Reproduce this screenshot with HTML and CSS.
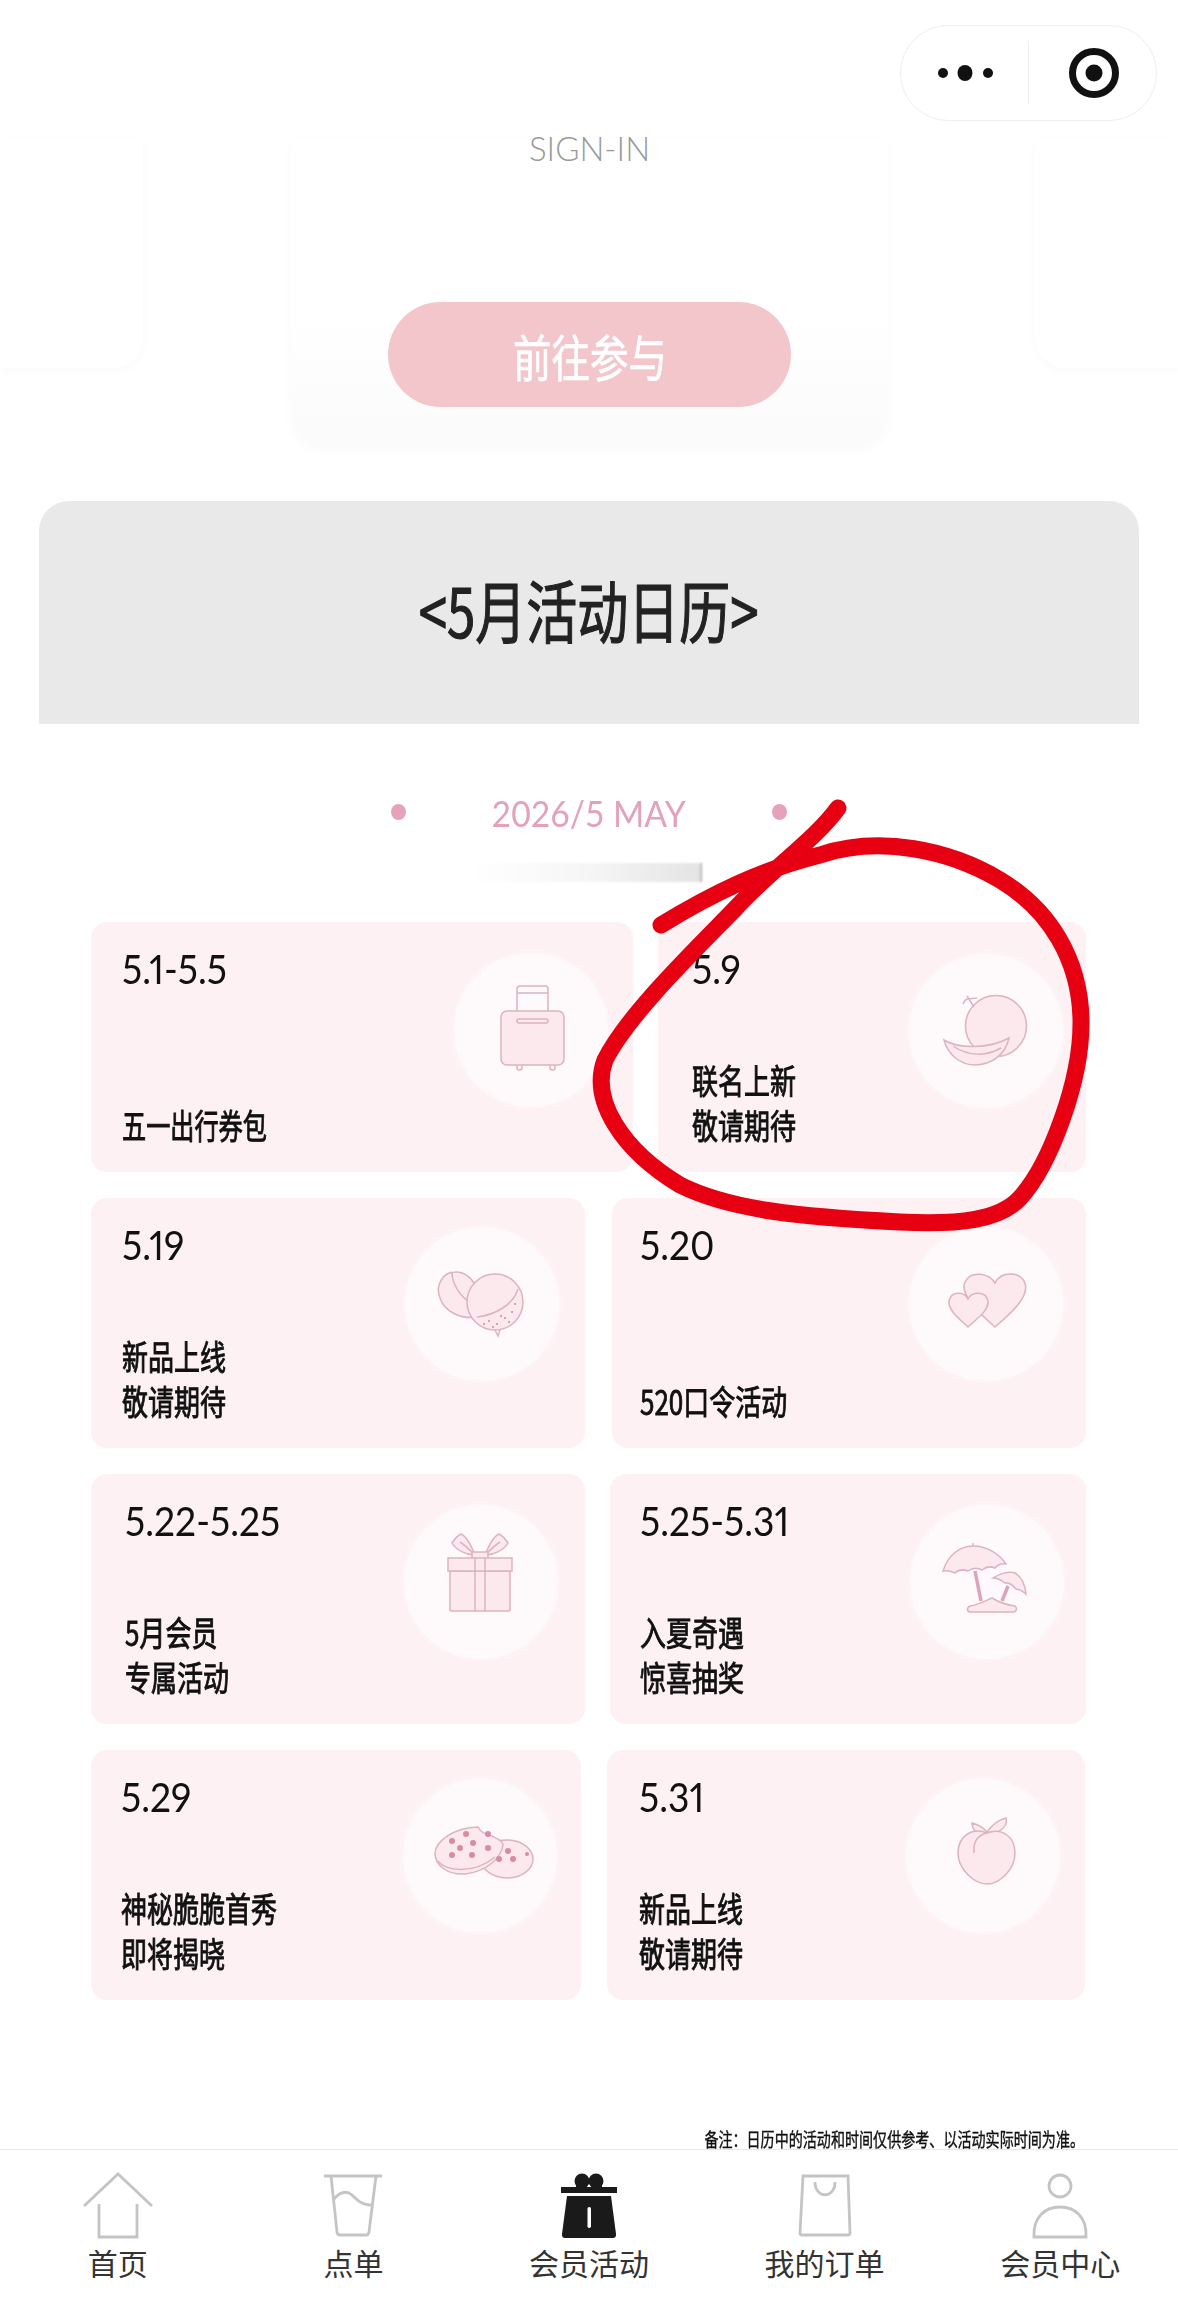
FILE: index.html
```html
<!DOCTYPE html>
<html lang="zh-CN">
<head>
  <meta charset="UTF-8">
  <title>5月活动日历</title>
  <link rel="stylesheet" href="styles.css">
</head>
<body>

  <!-- Top bar with mini program capsule -->
  <div class="topbar">
    <div class="capsule">
      <svg class="cap-more" width="60" height="20" viewBox="0 0 60 20">
        <circle cx="6" cy="10" r="5"/>
        <ellipse cx="28" cy="10" rx="7.500" ry="8"/>
        <circle cx="51" cy="10" r="5"/>
      </svg>
      <span class="cap-line"></span>
      <svg class="cap-target" width="52" height="52" viewBox="0 0 52 52">
        <circle cx="26" cy="26" r="21.500" fill="none" stroke="#111" stroke-width="7"/>
        <circle cx="26" cy="26" r="8.500"/>
      </svg>
    </div>
  </div>

  <!-- Sign-in carousel, running under the top bar -->
  <div class="carousel">
    <div class="slide slide-left"></div>
    <div class="slide slide-main">
      <div class="slide-title">SIGN-IN</div>
      <div class="go-btn"><span>前往参与</span></div>
    </div>
    <div class="slide slide-right"></div>
  </div>

  <!-- Calendar -->
  <div class="calendar">
    <div class="cal-head"><h1>&lt;5月活动日历&gt;</h1></div>
    <div class="cal-body">
      <div class="month">
        <i class="dot"></i>
        <span class="month-label"><span>2026/5 MAY</span></span>
        <i class="dot"></i>
      </div>
      <div class="smudge"></div>

      <div class="row row-1">
        <div class="card c-bag">
          <div class="card-text">
            <div class="date"><span>5.1-5.5</span></div>
            <div class="note note-sm"><span>五一出行券包</span></div>
          </div>
          <div class="circle">
            <svg viewBox="0 0 154 154">
              <path class="ln" d="M63 58V36q0-3 3-3h25q3 0 3 3v22M63 40h31"/>
              <rect class="fl" x="47" y="58" width="63" height="54" rx="6"/>
              <rect class="ln" x="63" y="66" width="31" height="4" rx="2"/>
              <path class="ln" d="M63 112v3q0 2 2.500 2t2.500-2v-3M96 112v3q0 2 2.500 2t2.500-2v-3"/>
            </svg>
          </div>
        </div>
        <div class="card c-melon">
          <div class="card-text">
            <div class="date"><span>5.9</span></div>
            <div class="note"><span>联名上新</span><span>敬请期待</span></div>
          </div>
          <div class="circle">
            <svg viewBox="0 0 154 154">
              <circle class="fl" cx="87" cy="72" r="30.500"/>
              <path class="ln" d="M65 53L58 42M54 50q2-5 5-5l9-1"/>
              <path class="fl" d="M35 86C50 95 80 95 100 84C96 102 82 110 67 111C50 111 39 100 35 86Z"/>
              <path class="ln" d="M44 92C60 103 78 102 92 94"/>
            </svg>
          </div>
        </div>
      </div>

      <div class="row row-2">
        <div class="card c-orange">
          <div class="card-text">
            <div class="date"><span>5.19</span></div>
            <div class="note"><span>新品上线</span><span>敬请期待</span></div>
          </div>
          <div class="circle">
            <svg viewBox="0 0 154 154">
              <path class="fl" d="M50 45C38 45 30 58 35 71C39 84 55 93 74 90L70 58C66 50 58 44 50 45Z"/>
              <path class="ln" d="M47 45C47 58 56 70 66 76"/>
              <circle class="fl" cx="90" cy="75" r="28"/>
              <path class="ln" d="M72 90C90 88 108 78 113 62M90 103l3 6 2-6"/>
              <path class="pips" d="M84 94h.1M92 97h.1M100 91h.1M107 85h.1M96 89h.1M88 100h.1M104 95h.1M110 77h.1M79 97h.1"/>
            </svg>
          </div>
        </div>
        <div class="card c-heart">
          <div class="card-text">
            <div class="date"><span>5.20</span></div>
            <div class="note"><span>520口令活动</span></div>
          </div>
          <div class="circle">
            <svg viewBox="0 0 154 154">
              <path class="fl" d="M86 56C80 46 62 43 56 55C50 68 72 88 86 100C100 88 121 70 116 56C111 44 92 44 86 56Z"/>
              <path class="fl" d="M59 72C55 64 42 64 40 74C39 84 52 93 59 100C66 93 80 84 79 74C77 64 63 64 59 72Z"/>
            </svg>
          </div>
        </div>
      </div>

      <div class="row row-3">
        <div class="card c-gift">
          <div class="card-text">
            <div class="date"><span>5.22-5.25</span></div>
            <div class="note"><span>5月会员</span><span>专属活动</span></div>
          </div>
          <div class="circle">
            <svg viewBox="0 0 154 154">
              <path class="fl" d="M71 50C67 40 62 31 57 29C53 31 50 35 48 38C52 45 62 50 71 50Z"/>
              <path class="fl" d="M81 50C85 40 90 31 95 29C99 31 102 35 104 38C100 45 90 50 81 50Z"/>
              <path class="ln" d="M56 37C61 40 66 45 71 50M96 37C91 40 86 45 81 50"/>
              <rect class="fl" x="68" y="47" width="16" height="7"/>
              <rect class="fl" x="46" y="66" width="60" height="40" rx="1"/>
              <rect class="fl" x="44" y="53" width="64" height="13"/>
              <path class="ln" d="M71 53v53M81 53v53"/>
            </svg>
          </div>
        </div>
        <div class="card c-beach">
          <div class="card-text">
            <div class="date"><span>5.25-5.31</span></div>
            <div class="note"><span>入夏奇遇</span><span>惊喜抽奖</span></div>
          </div>
          <div class="circle">
            <svg viewBox="0 0 154 154">
              <path class="fl" d="M33 66C38 50 50 41 63 41C78 41 90 50 96 59Q89 58 85 63Q78 60 72 65Q65 61 58 66Q50 63 45 68Q38 65 33 66Z"/>
              <path class="ln" d="M63 41v-3"/>
              <path class="pole" d="M65 66L71 96"/>
              <path class="fl" d="M83 73C90 68 100 66 105 68C112 72 115 80 116 89Q110 84 106 84Q100 77 95 78Q89 73 83 73Z"/>
              <path class="pole" d="M98 81L92 96"/>
              <path class="fl" d="M60 101C68 100 75 96 82 93C90 98 98 100 105 101C108 104 106 107 103 107H61C57 107 56 103 60 101Z"/>
            </svg>
          </div>
        </div>
      </div>

      <div class="row row-4">
        <div class="card c-cookie">
          <div class="card-text">
            <div class="date"><span>5.29</span></div>
            <div class="note"><span>神秘脆脆首秀</span><span>即将揭晓</span></div>
          </div>
          <div class="circle">
            <svg viewBox="0 0 154 154">
              <ellipse class="fl" cx="104" cy="80" rx="26" ry="19"/>
              <path class="fl" d="M32 74C33 62 50 49 75 48C78 54 84 56 89 57C95 60 100 62 100 66C98 80 82 93 62 95C45 96 32 87 32 74Z"/>
              <path class="ln" d="M35 82C42 92 70 96 92 78"/>
              <g class="crumbs">
                <circle cx="49" cy="62" r="3"/><circle cx="63" cy="55" r="3"/><circle cx="85" cy="55" r="3"/>
                <circle cx="70" cy="64" r="3"/><circle cx="57" cy="69" r="3"/><circle cx="49" cy="76" r="3"/>
                <circle cx="69" cy="76" r="3"/><circle cx="85" cy="69" r="3"/><circle cx="105" cy="72" r="3"/>
                <circle cx="96" cy="80" r="3"/><circle cx="110" cy="80" r="3"/><circle cx="124" cy="75" r="2"/>
              </g>
            </svg>
          </div>
        </div>
        <div class="card c-peach">
          <div class="card-text">
            <div class="date"><span>5.31</span></div>
            <div class="note"><span>新品上线</span><span>敬请期待</span></div>
          </div>
          <div class="circle">
            <svg viewBox="0 0 154 154">
              <path class="fl" d="M81 53C76 47 70 45 66 44C66 50 70 54 76 55ZM81 53C86 46 92 41 100 39C102 46 96 52 88 54Z"/>
              <path class="fl" d="M81 54C66 48 52 57 52 74C52 90 68 105 81 105C94 105 109 90 109 74C109 58 96 48 81 54Z"/>
              <path class="ln" d="M81 54C72 56 67 62 68 74"/>
            </svg>
          </div>
        </div>
      </div>
    </div>
  </div>

  <div class="remark"><span>备注：日历中的活动和时间仅供参考、以活动实际时间为准。</span></div>

  <!-- Bottom tabs -->
  <div class="tabbar">
    <div class="tab">
      <svg viewBox="0 0 80 68"><path d="M6 34L40 2L74 34M21 32V65H59V32"/></svg>
      <span>首页</span>
    </div>
    <div class="tab">
      <svg viewBox="0 0 80 68"><path d="M11 4H69M18 4L24 60q.500 3 3 3H53q2.500 0 3-3L63 4M21 27C27 20 33 18 39 23C44 28 49 33 58 33"/></svg>
      <span>点单</span>
    </div>
    <div class="tab">
      <svg class="tab-on" viewBox="0 0 80 68">
        <circle cx="33" cy="9" r="7.500"/><circle cx="47" cy="9" r="7.500"/><path d="M27 12L40 17L53 12V15H27Z"/>
        <rect x="12" y="15" width="56" height="6"/>
        <path d="M18 24H62L67 62q.300 4-3 4H16q-3.300 0-3-4Z"/>
        <rect class="slot" x="38.500" y="35" width="3.500" height="21" rx="1.700"/>
      </svg>
      <span>会员活动</span>
    </div>
    <div class="tab">
      <svg viewBox="0 0 80 68"><path d="M18 4H63L65 61q0 2-2 2H17q-2 0-2-2ZM30 10C30 27 50 27 50 10"/></svg>
      <span>我的订单</span>
    </div>
    <div class="tab">
      <svg viewBox="0 0 80 68"><circle cx="40" cy="14" r="11"/><path d="M14 65C13 45 25 35 40 35C55 35 67 45 66 65Z"/></svg>
      <span>会员中心</span>
    </div>
  </div>

  <!-- Hand drawn red circle on top of the screenshot -->
  <svg class="scribble" viewBox="0 0 1178 2322">
    <path d="M838 808C815 840 770 870 733 911C690 955 628 1015 605 1060C590 1100 622 1150 680 1185C730 1210 800 1217 900 1222C960 1225 1000 1220 1020 1198C1050 1165 1082 1080 1081 1020C1080 960 1050 910 1000 880C950 850 880 835 820 855C760 870 710 895 661 925"/>
  </svg>

</body>
</html>
```
FILE: styles.css
```css
* {
  box-sizing: border-box;
}
body {
  margin: 0;
  width: 1178px;
  height: 2322px;
  position: relative;
  overflow: hidden;
  background: #fff;
  font-family: "Noto Sans CJK SC", "Noto Sans", sans-serif;
  color: #111;
}

/* top bar */
.topbar {
  height: 138px;
  padding: 25px 21px 0 0;
  display: flex;
  justify-content: flex-end;
  align-items: flex-start;
  background: #fff;
}
.capsule {
  width: 257px;
  height: 96px;
  border: 1px solid #eee;
  border-radius: 48px;
  display: flex;
  align-items: center;
}
.cap-more {
  margin-left: 36px;
  fill: #111;
}
.cap-line {
  width: 1px;
  height: 62px;
  margin-left: 31px;
  background: #eee;
}
.cap-target {
  margin-left: 39px;
  fill: #111;
}

/* carousel */
.carousel {
  height: 363px;
  display: flex;
  align-items: flex-start;
}
.slide {
  background: #fff;
  box-shadow: 0 3px 12px rgba(0, 0, 0, .025);
}
.slide-left {
  flex: none;
  width: 143px;
  height: 230px;
  border-radius: 0 0 30px 0;
}
.slide-main {
  flex: none;
  width: 597px;
  height: 309px;
  margin-left: 148px;
  border-radius: 0 0 30px 30px;
  background: linear-gradient(#fff 55%, #fbfbfb);
  display: flex;
  flex-direction: column;
  align-items: center;
}
.slide-right {
  flex: none;
  width: 143px;
  height: 230px;
  margin-left: 147px;
  border-radius: 0 0 0 30px;
}
.slide-title {
  height: 37px;
  margin-top: -8px;
  font-family: Lato, sans-serif;
  font-weight: 300;
  font-size: 33px;
  line-height: 37px;
  color: #999;
}
.go-btn {
  width: 403px;
  height: 105px;
  margin-top: 135px;
  border-radius: 53px;
  background: #f2c6cb;
  display: flex;
  align-items: center;
  justify-content: center;
  color: #fff;
  font-size: 50px;
  -webkit-text-stroke: .7px #fff;
  white-space: nowrap;
}
.go-btn span {
  display: inline-block;
  transform: scaleX(.77);
}

/* calendar */
.calendar {
  width: 1100px;
  margin-left: 39px;
}
.cal-head {
  height: 223px;
  padding-bottom: 8px;
  border-radius: 30px 30px 0 0;
  background: #e9e9e9;
  display: flex;
  align-items: center;
  justify-content: center;
}
.cal-head h1 {
  margin: 0;
  font-size: 68px;
  font-weight: 400;
  -webkit-text-stroke: 1.200px #222;
  line-height: 80px;
  color: #222;
  white-space: nowrap;
  transform: scaleX(.75);
}
.cal-body {
  padding: 68px 0 0 52px;
}
.month {
  width: 396px;
  height: 40px;
  margin-left: 300px;
  display: flex;
  align-items: center;
  justify-content: space-between;
}
.dot {
  width: 15px;
  height: 16px;
  border-radius: 50%;
  background: #e5a3bb;
}
.month-label {
  display: flex;
  justify-content: center;
  width: 195px;
  font-family: Lato, sans-serif;
  font-size: 37px;
  color: #e3a2b8;
  white-space: nowrap;
}
.month-label span {
  display: inline-block;
  transform: scaleX(.91);
}
.smudge {
  width: 229px;
  height: 19px;
  margin: 31px 0 40px 382px;
  background: linear-gradient(90deg, #fff, #f6f6f6 50%, #e4e4e4 99%, #999);
  filter: blur(1px);
}

/* activity cards */
.row {
  display: grid;
  height: 250px;
  margin-bottom: 26px;
}
.row-1 {
  grid-template-columns: 542px 428px;
  column-gap: 25px;
}
.row-2 {
  grid-template-columns: 494px 474px;
  column-gap: 27px;
}
.row-3 {
  grid-template-columns: 494px 476px;
  column-gap: 25px;
}
.row-4 {
  grid-template-columns: 490px 478px;
  column-gap: 26px;
  margin-bottom: 0;
}
.card {
  border-radius: 16px;
  background: #fdf1f4;
  display: flex;
  justify-content: space-between;
  padding: 0 24px 0 31px;
}
.card-text {
  display: flex;
  flex-direction: column;
  justify-content: space-between;
  padding: 27px 0 25px;
}
.date {
  font-family: Lato, sans-serif;
  font-size: 40px;
  line-height: 40px;
  font-variant-numeric: proportional-nums;
  white-space: nowrap;
}
.date span {
  display: inline-block;
  transform: scaleX(.93);
  transform-origin: left;
}
.note {
  font-size: 34px;
  -webkit-text-stroke: .9px #111;
  line-height: 45px;
  white-space: nowrap;
}
.note span {
  display: block;
  transform: scaleX(.765);
  transform-origin: left;
}
.note-sm span {
  transform: scaleX(.71);
}
.circle {
  flex: none;
  width: 154px;
  height: 154px;
  margin-top: 31px;
  border-radius: 50%;
  background: #fef9fb;
  box-shadow: 0 0 5px #fef9fb;
}
.circle svg {
  display: block;
}
.ln, .fl {
  stroke: #dcb3c0;
  stroke-width: 1.500;
  fill: none;
}
.fl {
  fill: #fbe9ee;
}
.pole {
  stroke: #dba5b7;
  stroke-width: 3.500;
  fill: none;
}
.pips {
  stroke: #d38da3;
  stroke-width: 2;
  stroke-linecap: round;
  fill: none;
}
.crumbs {
  fill: #d98ba5;
}

/* per card tweaks, the source picture is not on a strict grid */
.c-bag { padding-right: 25px; }
.c-melon { padding-left: 34px; padding-right: 23px; }
.c-orange { padding-right: 26px; }
.c-heart { padding-left: 28px; padding-right: 23px; }
.c-gift { padding-left: 34px; padding-right: 27px; }
.c-beach { padding-left: 30px; padding-right: 22px; }
.c-cookie { padding-left: 30px; padding-right: 24px; }
.c-peach { padding-left: 32px; padding-right: 25px; }
.c-melon .circle { margin-top: 32px; }
.c-orange .circle, .c-heart .circle, .c-cookie .circle, .c-peach .circle { margin-top: 29px; }

.remark {
  height: 21px;
  margin-top: 128px;
  padding-right: 94px;
  display: flex;
  justify-content: flex-end;
  font-size: 19px;
  -webkit-text-stroke: .4px #111;
  line-height: 21px;
  color: #111;
  white-space: nowrap;
}
.remark span {
  display: inline-block;
  transform: scaleX(.74);
  transform-origin: right;
}

/* bottom tabs */
.tabbar {
  height: 173px;
  border-top: 1px solid #e8e8e8;
  background: #fff;
  display: flex;
}
.tab {
  flex: 1;
  padding-top: 22px;
  display: flex;
  flex-direction: column;
  align-items: center;
  font-size: 30px;
  line-height: 30px;
  color: #333;
}
.tab svg {
  width: 80px;
  height: 68px;
  margin-bottom: 7px;
  fill: none;
  stroke: #c4c4c4;
  stroke-width: 2.800;
}
.tab svg.tab-on {
  fill: #1a1a1a;
  stroke: none;
}
.tab-on .slot {
  fill: #fff;
}

/* red pen */
.scribble {
  position: absolute;
  top: 0;
  left: 0;
  width: 1178px;
  height: 2322px;
  pointer-events: none;
  fill: none;
  stroke: #e60012;
  stroke-width: 17;
  stroke-linecap: round;
}
```
